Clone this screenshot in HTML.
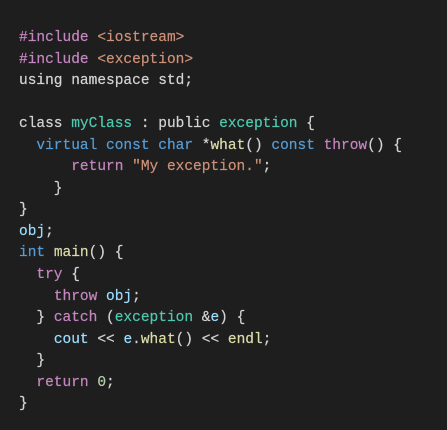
<!DOCTYPE html>
<html><head><style>
html,body{margin:0;padding:0;background:#1e1e1e;width:447px;height:430px;overflow:hidden}
pre{margin:0;position:absolute;left:19px;top:28px;font-family:"Liberation Mono",monospace;font-size:14.5px;line-height:21.55px;color:#d4d4d4;-webkit-text-stroke:0.2px}
.p{color:#c586c0}.s{color:#ce9178}.t{color:#4ec9b0}.k{color:#569cd6}.f{color:#dcdcaa}.v{color:#9cdcfe}.n{color:#b5cea8}
</style></head><body><pre><span class="p">#include</span> <span class="s">&lt;iostream&gt;</span>
<span class="p">#include</span> <span class="s">&lt;exception&gt;</span>
using namespace std;

class <span class="t">myClass</span> : public <span class="t">exception</span> {
  <span class="k">virtual</span> <span class="k">const</span> <span class="k">char</span> *<span class="f">what</span>() <span class="k">const</span> <span class="p">throw</span>() {
      <span class="p">return</span> <span class="s">"My exception."</span>;
    }
}
<span class="v">obj</span>;
<span class="k">int</span> <span class="f">main</span>() {
  <span class="p">try</span> {
    <span class="p">throw</span> <span class="v">obj</span>;
  } <span class="p">catch</span> (<span class="t">exception</span> &amp;<span class="v">e</span>) {
    <span class="v">cout</span> &lt;&lt; <span class="v">e</span>.<span class="f">what</span>() &lt;&lt; <span class="f">endl</span>;
  }
  <span class="p">return</span> <span class="n">0</span>;
}</pre></body></html>
